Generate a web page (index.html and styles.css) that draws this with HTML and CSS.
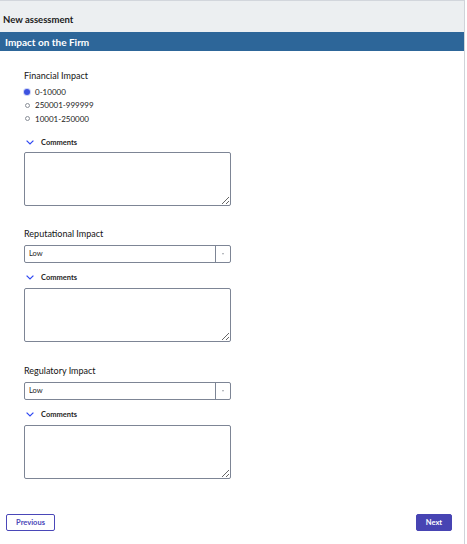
FILE: index.html
```html
<!DOCTYPE html>
<html lang="en">
<head>
<meta charset="utf-8">
<title>New assessment</title>
<link rel="stylesheet" href="styles.css">
</head>
<body>
<div class="page">
  <div class="topbar"><span class="title">New assessment</span></div>
  <div class="section-header">Impact on the Firm</div>
  <div class="content">
    <div class="group">
      <div class="label">Financial Impact</div>
      <div class="radios">
        <div class="radio-row"><span class="radio checked"></span><span class="radio-text">0-10000</span></div>
        <div class="radio-row"><span class="radio"></span><span class="radio-text">250001-999999</span></div>
        <div class="radio-row"><span class="radio"></span><span class="radio-text">10001-250000</span></div>
      </div>
      <div class="comments-toggle comments-after-radios">
        <svg class="chevron" width="8" height="5" viewBox="0 0 8 5"><path d="M0.6 0.6 L4 4 L7.4 0.6" fill="none" stroke="#2f48f2" stroke-width="1.2"/></svg>
        <span class="comments-text">Comments</span>
      </div>
      <textarea class="comment-box first-box"></textarea>
    </div>

    <div class="group">
      <div class="label">Reputational Impact</div>
      <div class="select"><span class="select-value">Low</span><span class="select-arrow"><span class="caret"></span></span></div>
      <div class="comments-toggle">
        <svg class="chevron" width="8" height="5" viewBox="0 0 8 5"><path d="M0.6 0.6 L4 4 L7.4 0.6" fill="none" stroke="#2f48f2" stroke-width="1.2"/></svg>
        <span class="comments-text">Comments</span>
      </div>
      <textarea class="comment-box"></textarea>
    </div>

    <div class="group group-spaced">
      <div class="label">Regulatory Impact</div>
      <div class="select"><span class="select-value">Low</span><span class="select-arrow"><span class="caret"></span></span></div>
      <div class="comments-toggle">
        <svg class="chevron" width="8" height="5" viewBox="0 0 8 5"><path d="M0.6 0.6 L4 4 L7.4 0.6" fill="none" stroke="#2f48f2" stroke-width="1.2"/></svg>
        <span class="comments-text">Comments</span>
      </div>
      <textarea class="comment-box"></textarea>
    </div>
  </div>
  <div class="footer">
    <button class="btn btn-outline">Previous</button>
    <button class="btn btn-primary">Next</button>
  </div>
</div>
</body>
</html>
```

FILE: styles.css
```css
html, body {
  margin: 0;
  padding: 0;
  background: #ffffff;
}
body {
  font-family: Lato, "Liberation Sans", sans-serif;
  color: #1a1a1a;
}
.page {
  width: 465px;
  height: 544px;
  border-right: 1px solid #cfd3d9;
  box-sizing: border-box;
  display: flex;
  flex-direction: column;
}
.topbar {
  height: 32px;
  box-sizing: border-box;
  border-top: 1px solid #d2d6dc;
  background: #eceff1;
  display: flex;
  align-items: center;
  padding-left: 3px;
  padding-top: 5px;
}
.title {
  font-size: 9.5px;
  font-weight: 700;
  color: #1b1b1b;
}
.section-header {
  height: 19px;
  background: #2d6699;
  color: #ffffff;
  font-size: 10px;
  font-weight: 700;
  display: flex;
  align-items: center;
  padding-left: 5px;
}
.content {
  padding: 19px 0 0 24px;
  display: flex;
  flex-direction: column;
  gap: 22px;
}
.group {
  display: flex;
  flex-direction: column;
}
.group-spaced {
  margin-top: 1px;
}
.label {
  font-size: 9px;
  line-height: 12px;
  height: 12px;
  color: #141414;
}
.radios {
  margin-top: 3px;
  display: flex;
  flex-direction: column;
}
.radio-row {
  height: 13.5px;
  display: flex;
  align-items: center;
}
.radio {
  width: 5px;
  height: 5px;
  border: 0.7px solid #8a8f98;
  border-radius: 50%;
  box-sizing: border-box;
  margin-left: 0.5px;
  margin-right: 5.5px;
}
.radio.checked {
  width: 6px;
  height: 6px;
  margin-left: 0;
  margin-right: 5px;
  border: none;
  background: #3c52e0;
  box-shadow: 0 0 0 1px #cdd3f7;
}
.radio-text {
  font-size: 8px;
  color: #1a1a1a;
}
.comments-toggle {
  margin-top: 9px;
  height: 12px;
  display: flex;
  align-items: center;
}
.comments-after-radios {
  margin-top: 11px;
}
.chevron {
  margin-left: 2px;
  margin-right: 7px;
}
.comments-text {
  font-size: 7.5px;
  font-weight: 700;
  color: #1f1f1f;
}
.comment-box {
  margin-top: 4px;
  width: 207px;
  height: 54px;
  box-sizing: border-box;
  border: 1px solid #7d8595;
  border-radius: 2px;
  padding: 2px;
  font-family: inherit;
  font-size: 8px;
  resize: vertical;
  outline: none;
  background: #ffffff;
}
.first-box {
  margin-top: 3px;
}
.select {
  margin-top: 5px;
  width: 207px;
  height: 18px;
  box-sizing: border-box;
  border: 1px solid #7d8595;
  border-radius: 2px;
  display: flex;
  align-items: stretch;
}
.select-value {
  flex: 1;
  display: flex;
  align-items: center;
  padding-left: 4px;
  font-size: 7.5px;
  color: #1f1f1f;
}
.select-arrow {
  width: 14px;
  border-left: 1px solid #7d8595;
  display: flex;
  align-items: center;
  justify-content: center;
}
.caret {
  width: 0;
  height: 0;
  border-left: 1.5px solid transparent;
  border-right: 1.5px solid transparent;
  border-top: 2px solid #a0a4ab;
}
.footer {
  margin-top: 35px;
  display: flex;
  justify-content: space-between;
  padding: 0 12px 0 6px;
}
.btn {
  height: 17px;
  box-sizing: border-box;
  border-radius: 2px;
  font-family: inherit;
  font-size: 7.5px;
  font-weight: 700;
  padding: 0;
  cursor: pointer;
}
.btn-outline {
  width: 49px;
  background: #ffffff;
  border: 1px solid #4a47b8;
  color: #4a47b8;
}
.btn-primary {
  width: 36px;
  background: #4744b3;
  border: 1px solid #4744b3;
  color: #ffffff;
}
```
